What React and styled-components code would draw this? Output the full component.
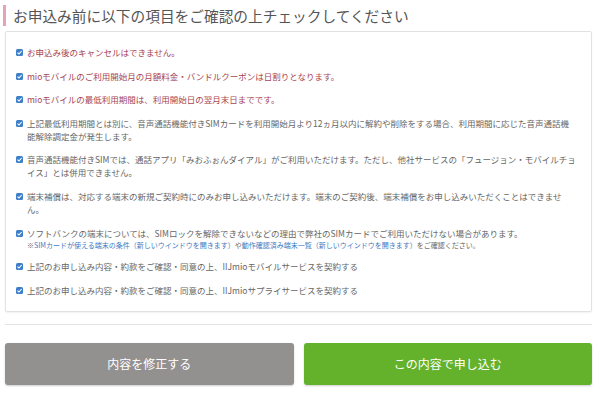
import React from "react";
import styled, { createGlobalStyle } from "styled-components";

const GlobalStyle = createGlobalStyle`
  body {
    margin: 0;
    background: #ffffff;
    font-family: "Noto Sans CJK JP", "Noto Sans", sans-serif;
  }
`;

const items = [
  { tone: "alert", text: "お申込み後のキャンセルはできません。" },
  { tone: "alert", text: "mioモバイルのご利用開始月の月額料金・バンドルクーポンは日割りとなります。" },
  { tone: "alert", text: "mioモバイルの最低利用期間は、利用開始日の翌月末日までです。" },
  {
    lines: [
      "上記最低利用期間とは別に、音声通話機能付きSIMカードを利用開始月より12ヵ月以内に解約や削除をする場合、利用期間に応じた音声通話機",
      "能解除調定金が発生します。",
    ],
  },
  {
    lines: [
      "音声通話機能付きSIMでは、通話アプリ「みおふぉんダイアル」がご利用いただけます。ただし、他社サービスの「フュージョン・モバイルチョ",
      "イス」とは併用できません。",
    ],
  },
  {
    lines: [
      "端末補償は、対応する端末の新規ご契約時にのみお申し込みいただけます。端末のご契約後、端末補償をお申し込みいただくことはできませ",
      "ん。",
    ],
  },
  {
    text: "ソフトバンクの端末については、SIMロックを解除できないなどの理由で弊社のSIMカードでご利用いただけない場合があります。",
    note: true,
  },
  { text: "上記のお申し込み内容・約款をご確認・同意の上、IIJmioモバイルサービスを契約する" },
  { text: "上記のお申し込み内容・約款をご確認・同意の上、IIJmioサプライサービスを契約する" },
];

const Check = () => (
  <Box>
    <svg width="7" height="7" viewBox="0 0 7 7">
      <path d="M1.5 3.6 L3 5 L5.6 2" fill="none" stroke="#fff" strokeWidth="1.1" />
    </svg>
  </Box>
);

const App = () => {
  return (
    <>
      <GlobalStyle />
      <Page>
        <Title>お申込み前に以下の項目をご確認の上チェックしてください</Title>
        <Panel>
          {items.map((item, i) => (
            <Item key={i}>
              <Check />
              <Body $tone={item.tone}>
                {item.lines
                  ? item.lines.map((l, j) => <Line key={j}>{l}</Line>)
                  : <Line>{item.text}</Line>}
                {item.note && (
                  <Note>
                    ※<NoteLink>SIMカードが使える端末の条件（新しいウインドウを開きます）</NoteLink>や
                    <NoteLink>動作確認済み端末一覧（新しいウインドウを開きます）</NoteLink>をご確認ください。
                  </Note>
                )}
              </Body>
            </Item>
          ))}
        </Panel>
        <Divider />
        <Actions>
          <Button $variant="back">内容を修正する</Button>
          <Button $variant="submit">この内容で申し込む</Button>
        </Actions>
      </Page>
    </>
  );
};

const Page = styled.div`
  width: 600px;
  height: 397px;
  box-sizing: border-box;
  padding: 5px 8px 0 3px;
  overflow: hidden;
`;

const Title = styled.h2`
  margin: 0 0 5px 0;
  padding: 0 0 0 7px;
  height: 21px;
  line-height: 21px;
  border-left: 3px solid #e6a2bb;
  font-size: 14.7px;
  font-weight: 400;
  color: #555555;
  white-space: nowrap;
`;

const Panel = styled.div`
  margin-left: 2px;
  border: 1px solid #e2e2e2;
  border-radius: 2px;
  box-shadow: 0 1px 2px rgba(0, 0, 0, 0.06);
  background: #ffffff;
  padding: 14px 10px 14px 10px;
  display: flex;
  flex-direction: column;
  gap: 10.6px;
`;

const Item = styled.div`
  display: flex;
  align-items: flex-start;
  gap: 4px;
`;

const Box = styled.span`
  flex: none;
  width: 7px;
  height: 7px;
  margin-top: 3px;
  border-radius: 1.5px;
  background: #3d7fc9;
  display: flex;
  align-items: center;
  justify-content: center;
  svg {
    display: block;
  }
`;

const Body = styled.div`
  font-size: 8.5px;
  line-height: 13px;
  color: ${(p) => (p.$tone === "alert" ? "#a8444f" : "#666666")};
`;

const Line = styled.div`
  white-space: nowrap;
`;

const Note = styled.div`
  font-size: 7px;
  line-height: 10px;
  color: #666666;
  white-space: nowrap;
`;

const NoteLink = styled.span`
  color: #3b7cc4;
`;

const Divider = styled.hr`
  margin: 12px 0 0 2px;
  border: none;
  border-top: 1px solid #e4e4e4;
`;

const Actions = styled.div`
  margin: 18px 0 0 2px;
  display: grid;
  grid-template-columns: 1fr 1fr;
  gap: 10px;
`;

const Button = styled.button`
  height: 42px;
  border: none;
  border-radius: 3px;
  font-family: "Noto Sans CJK JP", "Noto Sans", sans-serif;
  font-size: 12px;
  color: #ffffff;
  background: ${(p) => (p.$variant === "submit" ? "#64b22c" : "#939090")};
  box-shadow: 0 1px 2px rgba(0, 0, 0, 0.2);
  cursor: pointer;
`;

export default App;
